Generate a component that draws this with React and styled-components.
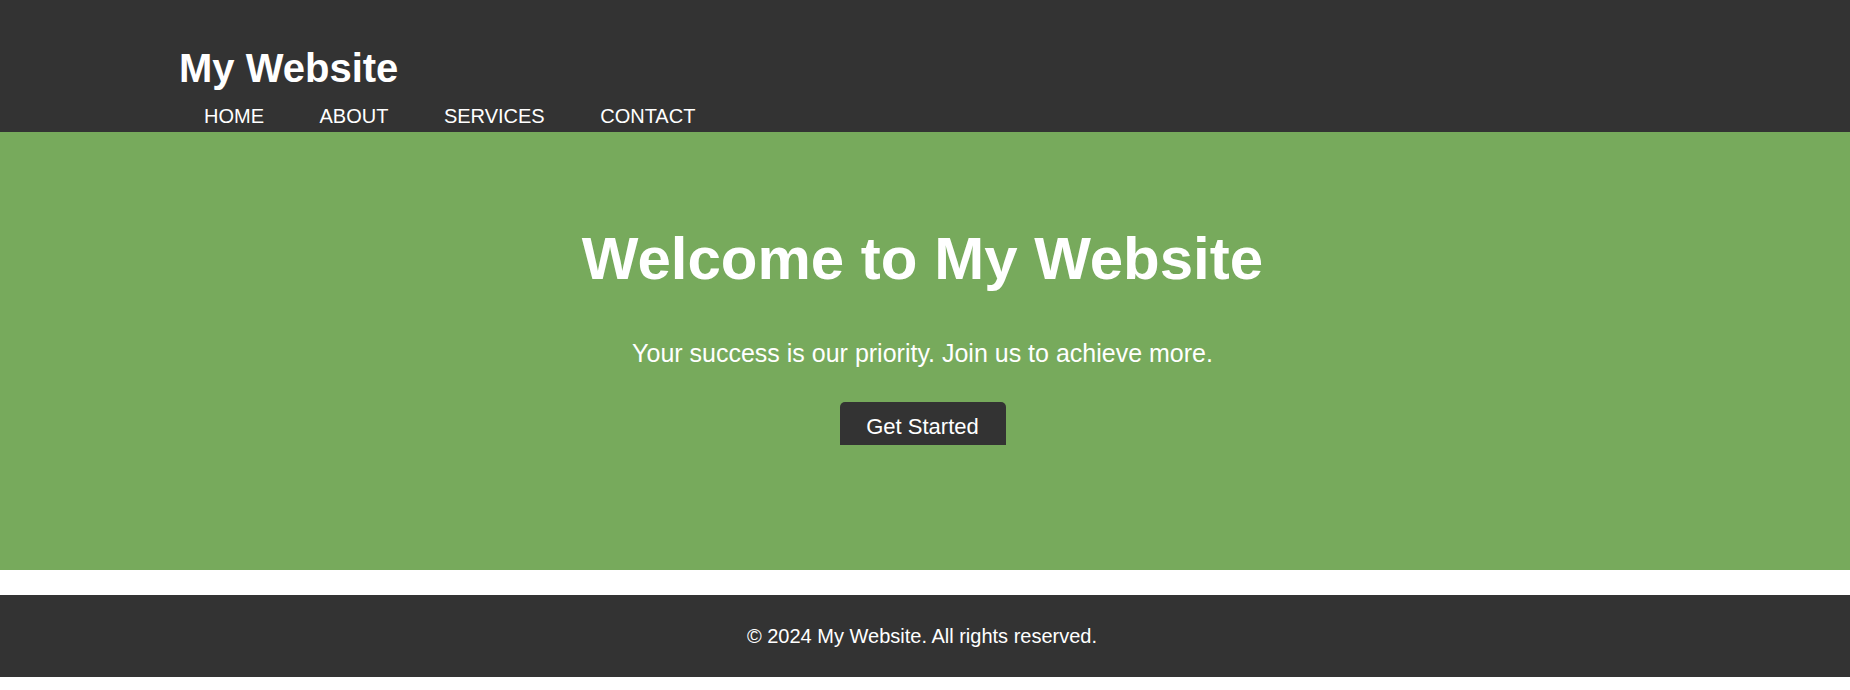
import React from "react";
import styled, { createGlobalStyle } from "styled-components";

const GlobalStyle = createGlobalStyle`
  body {
    margin: 0;
    background: #fff;
    font-family: "Liberation Sans", Arial, sans-serif;
  }
`;

const Header = styled.header`
  background-color: #333;
  color: #fff;
  padding: 45px 0 4px 179px;
`;

const Logo = styled.h1`
  margin: 0;
  font-size: 40px;
  line-height: 46px;
  font-weight: bold;
`;

const Nav = styled.nav`
  display: flex;
  gap: 55.5px;
  margin-top: 14px;
  padding-left: 25px;
  & a {
    color: #fff;
    text-decoration: none;
    font-size: 20px;
    line-height: 23px;
  }
`;

const Hero = styled.section`
  background-color: #77aa5c;
  color: #fff;
  text-align: center;
  padding: 92px 5px 125px 0;
  display: flex;
  flex-direction: column;
  align-items: center;
`;

const HeroTitle = styled.h2`
  margin: 0;
  font-size: 60px;
  line-height: 69px;
  font-weight: bold;
`;

const HeroText = styled.p`
  margin: 46px 0 0;
  font-size: 25px;
  line-height: 28px;
`;

const StartButton = styled.button`
  margin-top: 35px;
  width: 166px;
  height: 43px;
  border: none;
  border-radius: 5px 5px 0 0;
  background-color: #333;
  color: #fff;
  font-family: inherit;
  font-size: 22px;
  padding: 6px 0 0;
  cursor: pointer;
`;

const Footer = styled.footer`
  margin-top: 25px;
  background-color: #333;
  color: #fff;
  text-align: center;
  padding: 30px 6px 30px 0;
  font-size: 20px;
  line-height: 22px;
`;

export default function App() {
  return (
    <>
      <GlobalStyle />
      <Header>
        <Logo>My Website</Logo>
        <Nav>
          <a href="#home">HOME</a>
          <a href="#about">ABOUT</a>
          <a href="#services">SERVICES</a>
          <a href="#contact">CONTACT</a>
        </Nav>
      </Header>
      <Hero>
        <HeroTitle>Welcome to My Website</HeroTitle>
        <HeroText>Your success is our priority. Join us to achieve more.</HeroText>
        <StartButton>Get Started</StartButton>
      </Hero>
      <Footer>© 2024 My Website. All rights reserved.</Footer>
    </>
  );
}
